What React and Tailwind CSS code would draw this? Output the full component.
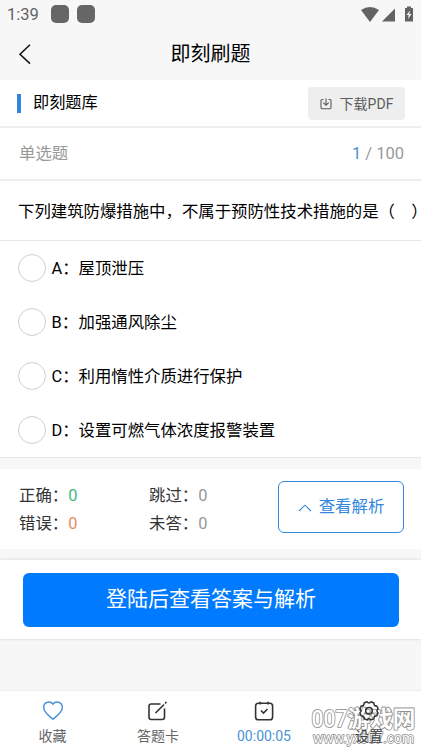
import { useState } from "react";

const options = [
  { key: "A", text: "屋顶泄压" },
  { key: "B", text: "加强通风除尘" },
  { key: "C", text: "利用惰性介质进行保护" },
  { key: "D", text: "设置可燃气体浓度报警装置" },
];

const stats = [
  { label: "正确：", value: 0, color: "text-[#45b884]" },
  { label: "跳过：", value: 0, color: "text-[#999999]" },
  { label: "错误：", value: 0, color: "text-[#ee8a62]" },
  { label: "未答：", value: 0, color: "text-[#999999]" },
];

function StatusBar() {
  return (
    <div className="flex h-[28px] items-center pl-[7px] pr-[7px] text-[#636363]">
      <span className="w-[44px] pt-[2px] text-[16.5px] leading-none">1:39</span>
      <span className="h-[18px] w-[18px] rounded-[5px] bg-[#666666]" />
      <span className="ml-2 h-[18px] w-[18px] rounded-[5px] bg-[#666666]" />
      <svg className="ml-auto" width="54" height="17" viewBox="0 0 54 17" fill="currentColor">
        <path d="M1 4Q10 -2 19 4L10 16Z" />
        <path d="M35 2.5V15.5H22Z" />
        <path d="M45 2H47V0.5H51V2H53V15.5H45Z" />
        <path d="M50 4.5L46.5 9H48.7L48 13L51.5 8H49.2Z" fill="#f7f7f7" />
      </svg>
    </div>
  );
}

function Header() {
  return (
    <header className="flex h-[52px] items-center">
      <button type="button" className="w-[60px] pl-[18px]" aria-label="返回">
        <svg width="14" height="21" viewBox="0 0 14 21" fill="none" stroke="#111" strokeWidth="1.5">
          <path d="M12 0.8L2 10.3L12 19.6" />
        </svg>
      </button>
      <h1 className="flex-1 text-center text-[20px] leading-none text-black">即刻刷题</h1>
      <span className="w-[60px]" />
    </header>
  );
}

function Option({ item, selected, onSelect }) {
  return (
    <button type="button" onClick={onSelect} className="flex h-[54px] w-full items-center pl-[17.5px] text-left">
      <span
        className={`h-7 w-7 shrink-0 rounded-full border-[1.5px] ${
          selected ? "border-[#2f86dc] bg-[#2f86dc]" : "border-[#d0d0d0]"
        }`}
      />
      <span className="ml-[6px] w-[27px] whitespace-nowrap pt-[2px]">{item.key}：</span>
      <span className="whitespace-nowrap pt-[2px]">{item.text}</span>
    </button>
  );
}

function HeartIcon() {
  return (
    <svg width="22" height="22" viewBox="0 0 22 22" fill="none" stroke="#4b93d8" strokeWidth="1.5">
      <path d="M11 4.2C8.8 1 1.7 1.2 1.7 7.4C1.7 12.3 6.8 15.6 11 19.2C15.2 15.6 20.3 12.3 20.3 7.4C20.3 1.2 13.2 1 11 4.2Z" />
    </svg>
  );
}

function EditIcon() {
  return (
    <svg width="22" height="22" viewBox="0 0 22 22" fill="none" stroke="#333" strokeWidth="1.6">
      <path d="M13.5 4H4.2Q2 4 2 6.2V17.3Q2 19.5 4.2 19.5H15.3Q17.5 19.5 17.5 17.3V8.5" />
      <path d="M8.5 13L17 4.5M18 3.4L19.5 2" />
    </svg>
  );
}

function CalendarIcon() {
  return (
    <svg width="22" height="22" viewBox="0 0 22 22" fill="none" stroke="#333" strokeWidth="1.6">
      <rect x="2.6" y="3.2" width="17" height="16.5" rx="2.8" />
      <path d="M7.2 1.7V4.5M15.2 1.7V4.5M8 10.5L10.5 13L14.5 9" />
    </svg>
  );
}

function GearIcon() {
  return (
    <svg width="22" height="22" viewBox="0 0 22 22" fill="none" stroke="#333" strokeWidth="1.5" strokeLinejoin="round">
      <path d="M9 1.8Q11 4.2 13 1.8L15.9 3Q15.7 6.2 18.9 6L20.1 8.8Q17.8 10.8 20.1 12.8L18.9 15.7Q15.7 15.5 15.9 18.7L13 19.9Q11 17.5 9 19.9L6.1 18.7Q6.3 15.5 3.1 15.7L1.9 12.8Q4.2 10.8 1.9 8.8L3.1 6Q6.3 6.2 6.1 3Z" />
      <circle cx="11" cy="10.8" r="3.3" />
    </svg>
  );
}

const tabs = [
  { label: "收藏", Icon: HeartIcon, color: "text-[#666666]" },
  { label: "答题卡", Icon: EditIcon, color: "text-[#666666]" },
  { label: "00:00:05", Icon: CalendarIcon, color: "text-[#4b93d8] text-[14.4px]" },
  { label: "设置", Icon: GearIcon, color: "text-[#444444]" },
];

function Watermark() {
  return (
    <svg
      className="pointer-events-none absolute right-0 top-[14px]"
      width="112"
      height="46"
      viewBox="0 0 112 46"
      fill="#ffffff"
      stroke="#8c8c8c"
      strokeWidth="1.7"
      paintOrder="stroke"
      strokeLinejoin="round"
    >
      <text x="2.5" y="21.5" fontSize="24" textLength="36" lengthAdjust="spacingAndGlyphs" fontWeight="500">
        007
      </text>
      <text x="38.5" y="21.5" fontSize="23" textLength="68" lengthAdjust="spacingAndGlyphs" fontWeight="700">
        游戏网
      </text>
      <text x="4" y="38" fontSize="14" textLength="101" lengthAdjust="spacingAndGlyphs" strokeWidth="1.5">
        www.yx007.com
      </text>
    </svg>
  );
}

export default function App() {
  const [selected, setSelected] = useState(null);

  return (
    <div className="flex h-[750px] w-[421px] flex-col overflow-hidden bg-[#f7f7f7] font-[Roboto,'Noto_Sans_CJK_SC',sans-serif] text-[16.4px] leading-none text-black">
      <StatusBar />
      <Header />

      <main className="flex-1">
        <section className="border-b border-[#e8e8e8] bg-white">
          <div className="flex h-[48px] items-center border-b-2 border-[#eeeeee] pl-[17px] pr-4">
            <span className="h-[19px] w-1 bg-[#2f86dc]" />
            <h2 className="ml-3 text-[16.2px]">即刻题库</h2>
            <button
              type="button"
              className="ml-auto flex h-[33px] w-[97px] items-center justify-center gap-2 rounded bg-[#eeeeee] pt-px text-[14px] text-[#5c5c5c]"
            >
              <svg width="12" height="12" viewBox="0 0 12 12" fill="none" stroke="currentColor" strokeWidth="1.1">
                <path d="M3.5 1.5H2Q1 1.5 1 2.5V9.5Q1 10.7 2 10.7H10Q11 10.7 11 9.5V2.5Q11 1.5 10 1.5H8.5M6 0.5V7M3.3 4.6L6 7.2L8.7 4.6" />
              </svg>
              下载PDF
            </button>
          </div>

          <div className="flex h-[53px] items-center justify-between border-b-2 border-[#eeeeee] pl-[19px] pr-[17px] pt-[2px] text-[#999999]">
            <span>单选题</span>
            <span className="text-[16.5px]">
              <span className="text-[#4b8fce]">1</span> / 100
            </span>
          </div>

          <p className="flex h-[60px] items-center whitespace-nowrap border-b border-[#e8e8e8] pl-[18px] pt-[3px]">
            下列建筑防爆措施中，不属于预防性技术措施的是（　）
          </p>

          <div>
            {options.map((item) => (
              <Option
                key={item.key}
                item={item}
                selected={selected === item.key}
                onSelect={() => setSelected(item.key)}
              />
            ))}
          </div>
        </section>

        <section className="mt-[11px] flex h-20 items-center bg-white pl-[19px] pr-[17px]">
          <div className="grid grid-cols-[130px_100px] pt-px leading-7">
            {stats.map((s) => (
              <div key={s.label} className="whitespace-nowrap text-[#333333]">
                {s.label}
                <span className={s.color}>{s.value}</span>
              </div>
            ))}
          </div>
          <button
            type="button"
            className="mb-[5px] ml-auto flex h-[52px] w-[126px] items-center justify-center gap-[7px] rounded-md border-[1.5px] border-[#3388dd] pt-[2px] text-[#3388dd]"
          >
            <svg width="14" height="8" viewBox="0 0 14 8" fill="none" stroke="currentColor" strokeWidth="1.1">
              <path d="M1 7L7 1.2L13 7" />
            </svg>
            查看解析
          </button>
        </section>

        <section className="mt-[11px] bg-white pb-3 pl-[23px] pr-[22px] pt-[13px] shadow-[0_0_3px_rgba(0,0,0,0.15)]">
          <button type="button" className="h-[54px] w-full rounded-md bg-[#007aff] pb-[2px] text-[21px] text-white">
            登陆后查看答案与解析
          </button>
        </section>
      </main>

      <nav className="relative grid h-[60px] grid-cols-[105px_106px_106px_104px] border-t border-[#eeeeee] bg-white">
        <Watermark />
        {tabs.map(({ label, Icon, color }) => (
          <button key={label} type="button" className="relative flex flex-col items-center pt-[9px]">
            <Icon />
            <span className={`mt-[6px] h-4 text-[14px] leading-4 ${color}`}>{label}</span>
          </button>
        ))}
      </nav>
    </div>
  );
}
